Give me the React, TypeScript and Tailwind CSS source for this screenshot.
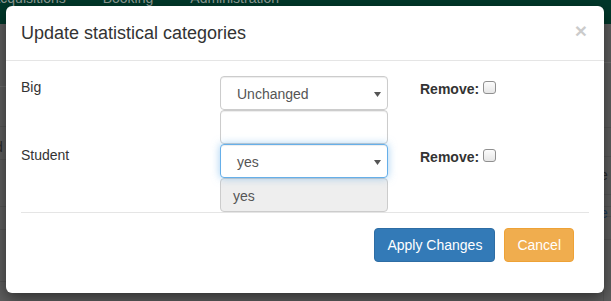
const navItems = ['Acquisitions', 'Booking', 'Administration'];

function Caret({ className = '' }: { className?: string }) {
  return (
    <svg width="7" height="5" viewBox="0 0 7 5" className={className}>
      <path d="M0 0h7L3.5 5z" fill="currentColor" />
    </svg>
  );
}

function PageBehind() {
  return (
    <div className="flex flex-col h-full">
      <nav className="h-[24px] shrink-0 bg-[#00382a] overflow-hidden">
        <div className="flex gap-[26px] -mt-[12px] -ml-[9px] text-[14px] leading-[20px] text-[#8f9a95]">
          {navItems.map((item) => (
            <span key={item} className="flex items-center gap-[4px]">
              {item}
              <Caret className="w-[7px] h-[4px]" />
            </span>
          ))}
        </div>
      </nav>
      <div className="flex flex-1">
        <div className="w-[8px] flex flex-col">
          <div className="h-[63px] border-b border-[#6c6c6c]" />
          <div className="h-[40px] border-b border-[#555]" />
          <div className="h-[33px] border-b border-[#555] relative">
            <span className="absolute -left-[5px] top-[10px] text-[14px] text-[#2a2a2a]">d</span>
          </div>
          <div className="h-[47px] border-b border-[#555]" />
          <div className="h-[23px] border-b border-[#555]" />
          <div className="h-[52px] border-b border-[#555]" />
        </div>
        <div className="flex-1" />
        <div className="w-[8px] flex flex-col border-l border-[#555]">
          <div className="h-[39px] border-b border-[#6c6c6c]" />
          <div className="h-[65px] border-b border-[#555]" />
          <div className="h-[29px] border-b border-[#555]" />
          <div className="h-[38px] border-b border-[#555] relative">
            <span className="absolute -left-[4px] top-[8px] text-[14px] text-[#2a2a2a]">e</span>
          </div>
          <div className="h-[12px] border-b border-[#555]" />
          <div className="h-[10px] border-b border-[#555] relative">
            <span className="absolute -left-[4px] top-[-4px] text-[14px] text-[#1f3d5c]">e</span>
          </div>
          <div className="h-[23px] border-b border-[#555]" />
        </div>
      </div>
    </div>
  );
}

function FakeSelect({ value, focused = false }: { value: string; focused?: boolean }) {
  return (
    <div
      className={`relative h-[34px] rounded-[4px] border bg-white pl-[16px] pt-[7px] text-[14px] leading-[20px] text-[#555] ${
        focused
          ? 'border-[#66afe9] shadow-[inset_0_1px_1px_rgba(0,0,0,0.075),0_0_8px_rgba(102,175,233,0.6)]'
          : 'border-[#ccc] shadow-[inset_0_1px_1px_rgba(0,0,0,0.075)]'
      }`}
    >
      {value}
      <Caret className="absolute right-[6px] top-[15px] text-[#555]" />
    </div>
  );
}

function RemoveBox() {
  return (
    <div className="flex items-start gap-[4px] pt-[3px] pl-[32px]">
      <span className="font-bold text-[14px] leading-[20px]">Remove:</span>
      <span className="mt-[2px] w-[13px] h-[13px] rounded-[3px] border border-[#909090] bg-gradient-to-b from-[#fcfcfc] to-[#e6e6e6]" />
    </div>
  );
}

export default function App() {
  return (
    <div className="relative w-[611px] h-[301px] overflow-hidden bg-[#5e5e5e] font-['Liberation_Sans',Arial,sans-serif] text-[14px] text-[#333]">
      <PageBehind />

      <div className="absolute left-[6px] top-[6px] w-[598px] h-[287px] rounded-[6px] bg-white shadow-[0_5px_15px_rgba(0,0,0,0.5)] flex flex-col">
        <header className="flex justify-between p-[15px] border-b border-[#e5e5e5]">
          <h4 className="text-[18px] leading-[25px] mt-[0px] -mb-[1px]">Update statistical categories</h4>
          <button className="text-[21px] font-bold leading-none text-black opacity-20 mr-[2px] -mt-[1px] self-start">
            ×
          </button>
        </header>

        <div className="px-[15px] pt-[15px]">
          <div className="flex">
            <label className="w-[199px] leading-[20px] mt-[1px]">Big</label>
            <div className="w-[168px] flex flex-col">
              <FakeSelect value="Unchanged" />
              <input
                type="text"
                className="h-[34px] rounded-[4px] border border-[#ccc] bg-white shadow-[inset_0_1px_1px_rgba(0,0,0,0.075)] outline-none"
              />
            </div>
            <RemoveBox />
          </div>

          <div className="flex">
            <label className="w-[199px] leading-[20px] mt-[1px]">Student</label>
            <div className="w-[168px] flex flex-col">
              <FakeSelect value="yes" focused />
              <div className="h-[34px] rounded-[4px] border border-[#ccc] bg-[#eee] pl-[12px] pt-[7px] leading-[20px] text-[#555]">
                yes
              </div>
            </div>
            <RemoveBox />
          </div>

          <div className="border-t border-[#e5e5e5] flex justify-end gap-[9px] pt-[15px] pr-[15px]">
            <button className="h-[34px] px-[12px] rounded-[4px] border border-[#2e6da4] bg-[#337ab7] text-white leading-[20px]">
              Apply Changes
            </button>
            <button className="h-[34px] px-[12px] rounded-[4px] border border-[#eea236] bg-[#f0ad4e] text-white leading-[20px]">
              Cancel
            </button>
          </div>
        </div>
      </div>
    </div>
  );
}
